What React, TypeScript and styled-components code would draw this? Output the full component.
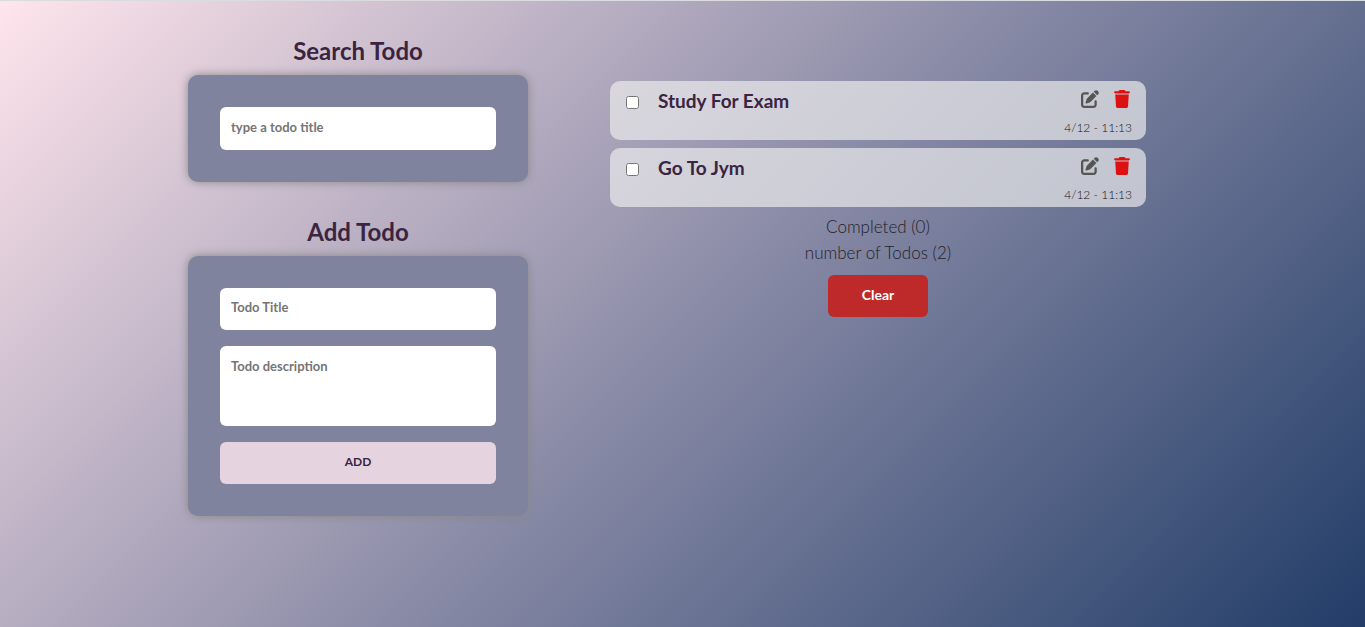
import React from "react";
import styled, { createGlobalStyle } from "styled-components";
import { FaPenToSquare, FaTrash } from "react-icons/fa6";

const GlobalStyle = createGlobalStyle`
  *, *::before, *::after { box-sizing: border-box; }
  body {
    margin: 0;
    font-family: "Arima Madurai", Lato, sans-serif;
    color: #3a2440;
  }
`;

const Page = styled.div`
  min-height: 100vh;
  border-top: 1px solid #dadce0;
  background: linear-gradient(135deg, #ffe5ec 0%, #8789a5 52%, #223d68 100%);
`;

const Layout = styled.main`
  display: grid;
  grid-template-columns: 340px minmax(0, 1fr);
  gap: 82px;
  align-items: start;
  padding: 30px 219px 32px 188px;

  @media (max-width: 1100px) {
    grid-template-columns: minmax(0, 1fr);
    gap: 32px;
    padding: 30px 32px;
  }
`;

const Forms = styled.div`
  display: flex;
  flex-direction: column;
  gap: 30px;
`;

const Heading = styled.h2`
  margin: 0 0 4px;
  font-size: 24px;
  line-height: 40px;
  font-weight: 700;
  text-align: center;
`;

const Panel = styled.form`
  display: flex;
  flex-direction: column;
  gap: 16px;
  padding: 32px;
  border-radius: 10px;
  background: #7f839e;
  box-shadow: 0 0 10px #888;
`;

const TextBox = styled.input<{ $tall?: boolean }>`
  width: 100%;
  height: ${(p) => (p.$tall ? 43 : 42)}px;
  padding: 0 11px 4px;
  border: 0;
  border-radius: 6px;
  background: #fff;
  font: inherit;
  font-size: 13px;
  font-weight: 700;
  color: #3a2440;

  &::placeholder { color: #757575; }
`;

const TextArea = styled.textarea`
  width: 100%;
  height: 80px;
  padding: 11px;
  border: 0;
  border-radius: 6px;
  background: #fff;
  font: inherit;
  font-size: 13px;
  line-height: 18px;
  font-weight: 700;
  color: #3a2440;
  resize: none;

  &::placeholder { color: #757575; }
`;

const Button = styled.button<{ $danger?: boolean }>`
  width: ${(p) => (p.$danger ? "100px" : "100%")};
  height: 42px;
  padding: 0 0 3px;
  border: 0;
  border-radius: 6px;
  background: ${(p) => (p.$danger ? "#be2929" : "#e5d4df")};
  color: ${(p) => (p.$danger ? "#fff" : "#3a2440")};
  font: inherit;
  font-size: ${(p) => (p.$danger ? "14px" : "12px")};
  font-weight: 700;
  cursor: pointer;
`;

const TodoSection = styled.section`
  display: flex;
  flex-direction: column;
  align-items: center;
  padding-top: 50px;
`;

const TodoList = styled.ul`
  display: flex;
  flex-direction: column;
  gap: 8px;
  width: 100%;
  margin: 0 0 7px;
  padding: 0;
  list-style: none;
`;

const TodoCard = styled.li`
  display: flex;
  align-items: flex-start;
  justify-content: space-between;
  min-height: 59px;
  padding: 8px 14px 0 16px;
  border-radius: 10px;
  background: rgba(238, 238, 238, 0.68);
`;

const TodoLabel = styled.label`
  display: flex;
  align-items: center;
  gap: 19px;
  font-size: 19px;
  line-height: 24px;
  font-weight: 700;
`;

const Check = styled.input`
  width: 13px;
  height: 13px;
  margin: 2px 0 0;
`;

const CardSide = styled.div`
  display: flex;
  flex-direction: column;
  align-items: flex-end;
  gap: 10px;
`;

const Actions = styled.div`
  display: flex;
  gap: 14px;
  padding-right: 1px;
`;

const IconButton = styled.button<{ $danger?: boolean }>`
  display: flex;
  padding: 1px 0 0;
  border: 0;
  background: none;
  color: ${(p) => (p.$danger ? "#dd1111" : "#555")};
  font-size: 18px;
  cursor: pointer;
`;

const Stamp = styled.time`
  font-size: 12px;
  line-height: 20px;
  font-weight: 300;
  color: #111;
`;

const Summary = styled.p`
  margin: 0;
  font-size: 17px;
  line-height: 26px;
  font-weight: 300;
  color: #22222a;
`;

const ClearRow = styled.div`
  padding-top: 9px;
`;

const todos = [
  { title: "Study For Exam", date: "4/12 - 11:13" },
  { title: "Go To Jym", date: "4/12 - 11:13" },
];

export default function App() {
  return (
    <Page>
      <GlobalStyle />
      <Layout>
        <Forms>
          <section>
            <Heading>Search Todo</Heading>
            <Panel onSubmit={(e) => e.preventDefault()}>
              <TextBox $tall type="text" aria-label="Search todos" placeholder="type a todo title" />
            </Panel>
          </section>
          <section>
            <Heading>Add Todo</Heading>
            <Panel onSubmit={(e) => e.preventDefault()}>
              <TextBox type="text" aria-label="Todo title" placeholder="Todo Title" />
              <TextArea aria-label="Todo description" placeholder="Todo description" />
              <Button type="submit">ADD</Button>
            </Panel>
          </section>
        </Forms>
        <TodoSection>
          <TodoList>
            {todos.map((todo) => (
              <TodoCard key={todo.title}>
                <TodoLabel>
                  <Check type="checkbox" />
                  {todo.title}
                </TodoLabel>
                <CardSide>
                  <Actions>
                    <IconButton type="button" aria-label="Edit">
                      <FaPenToSquare />
                    </IconButton>
                    <IconButton type="button" $danger aria-label="Delete">
                      <FaTrash />
                    </IconButton>
                  </Actions>
                  <Stamp>{todo.date}</Stamp>
                </CardSide>
              </TodoCard>
            ))}
          </TodoList>
          <Summary>Completed (0)</Summary>
          <Summary>number of Todos (2)</Summary>
          <ClearRow>
            <Button type="button" $danger>Clear</Button>
          </ClearRow>
        </TodoSection>
      </Layout>
    </Page>
  );
}
